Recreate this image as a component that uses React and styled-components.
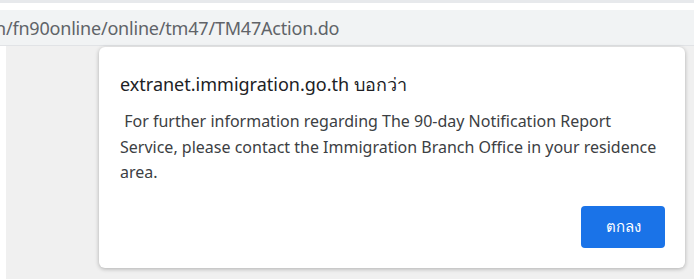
import React from "react";
import styled, { createGlobalStyle } from "styled-components";

const GlobalStyle = createGlobalStyle`
  body {
    margin: 0;
    background: #ffffff;
    font-family: "Noto Sans", "Open Sans", sans-serif;
  }
`;

const Page = styled.div`
  width: 694px;
  height: 279px;
  overflow: hidden;
  display: flex;
  flex-direction: column;
  background: #ffffff;
`;

const TopStrip = styled.div`
  height: 3px;
  background: #e7e9ec;
  margin-bottom: 7px;
`;

const AddressBar = styled.div`
  height: 35px;
  background: #f1f3f4;
  border-bottom: 1px solid #e1e3e6;
  display: flex;
  align-items: center;
  overflow: hidden;
`;

const Url = styled.span`
  margin-left: -5px;
  font-size: 18px;
  color: #606368;
  white-space: nowrap;
  letter-spacing: -0.2px;
`;

const Content = styled.div`
  flex: 1;
  display: flex;
`;

const Gutter = styled.div`
  width: 6px;
  background: #ffffff;
`;

const Viewport = styled.div`
  flex: 1;
  background: #f0f0f0;
  padding: 1px 0 0 93px;
`;

const Dialog = styled.div`
  width: 586px;
  height: 221px;
  box-sizing: border-box;
  background: #ffffff;
  border-radius: 6px;
  box-shadow: 0 1px 4px rgba(0, 0, 0, 0.28);
  padding: 23px 20px 20px 21px;
  display: flex;
  flex-direction: column;
`;

const Title = styled.div`
  font-size: 18px;
  line-height: 28px;
  color: #202124;
`;

const Message = styled.div`
  margin-top: 11px;
  font-size: 16px;
  line-height: 25.5px;
  color: #3c4043;
  white-space: pre-wrap;
`;

const Actions = styled.div`
  margin-top: auto;
  display: flex;
  justify-content: flex-end;
`;

const OkButton = styled.button`
  width: 84px;
  height: 42px;
  border: none;
  border-radius: 4px;
  background: #1a73e8;
  color: #ffffff;
  font-family: inherit;
  font-size: 15px;
`;

export default function App() {
  return (
    <Page>
      <GlobalStyle />
      <TopStrip />
      <AddressBar>
        <Url>h/fn90online/online/tm47/TM47Action.do</Url>
      </AddressBar>
      <Content>
        <Gutter />
        <Viewport>
          <Dialog>
            <Title>extranet.immigration.go.th บอกว่า</Title>
            <Message>
              {" For further information regarding The 90-day Notification Report Service, please contact the Immigration Branch Office in your residence area."}
            </Message>
            <Actions>
              <OkButton>ตกลง</OkButton>
            </Actions>
          </Dialog>
        </Viewport>
      </Content>
    </Page>
  );
}
